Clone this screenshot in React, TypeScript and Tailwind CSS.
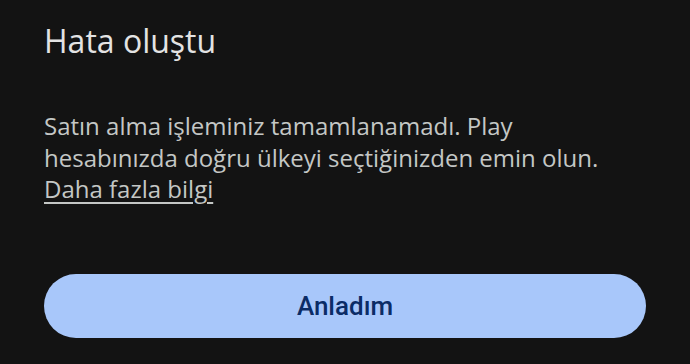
export default function App() {
  return (
    <div className="flex h-[364px] w-[690px] flex-col bg-[#131313] px-[44px] font-['Open_Sans',sans-serif]">
      <h1 className="pt-[21px] text-[32px] leading-[40px] text-[#e3e3e3]">Hata oluştu</h1>
      <p className="mt-[49px] text-[24px] leading-[31.5px] text-[#c4c7c5]">
        Satın alma işleminiz tamamlanamadı. Play
        <br />
        hesabınızda doğru ülkeyi seçtiğinizden emin olun.
        <br />
        <a className="underline underline-offset-[4px]">Daha fazla bilgi</a>
      </p>
      <div className="mt-auto mb-[26px]">
        <button className="h-[64px] w-full rounded-full bg-[#a8c7fa] font-['Roboto',sans-serif] text-[26px] font-medium text-[#0b2c66]">
          Anladım
        </button>
      </div>
    </div>
  );
}
